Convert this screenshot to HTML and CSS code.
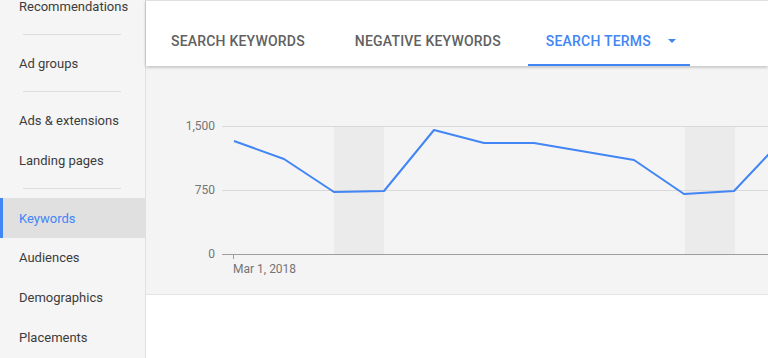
FILE: index.html
```html
<!DOCTYPE html>
<html lang="en">

<head>
    <meta charset="UTF-8">
    <meta name="viewport" content="width=device-width, initial-scale=1.0">
    <title>Keywords</title>
    <link rel="stylesheet" href="styles.css">
</head>

<body>
    <nav class="sidebar">
        <a class="nav-item">Recommendations</a>
        <div class="nav-divider"></div>
        <a class="nav-item">Ad groups</a>
        <div class="nav-divider"></div>
        <a class="nav-item">Ads &amp; extensions</a>
        <a class="nav-item">Landing pages</a>
        <div class="nav-divider"></div>
        <a class="nav-item active">Keywords</a>
        <a class="nav-item">Audiences</a>
        <a class="nav-item">Demographics</a>
        <a class="nav-item">Placements</a>
    </nav>

    <main class="main">
        <div class="tabs">
            <div class="tab">SEARCH KEYWORDS</div>
            <div class="tab">NEGATIVE KEYWORDS</div>
            <div class="tab active">SEARCH TERMS <span class="caret"></span></div>
        </div>

        <div class="chart">
            <!-- viewBox uses page coordinates so the points are easy to read off -->
            <svg width="622" height="227" viewBox="146 67 622 227">
                <rect x="334" y="126" width="50" height="128" fill="#ebebeb" />
                <rect x="685" y="126" width="50" height="128" fill="#ebebeb" />

                <line x1="222" y1="126.5" x2="768" y2="126.5" stroke="#d9d9d9" />
                <line x1="222" y1="190.5" x2="768" y2="190.5" stroke="#d9d9d9" />
                <line x1="222" y1="254.5" x2="768" y2="254.5" stroke="#9e9e9e" />
                <line x1="233.5" y1="254" x2="233.5" y2="259" stroke="#9e9e9e" />

                <text class="axis-label" x="215" y="130" text-anchor="end">1,500</text>
                <text class="axis-label" x="215" y="194" text-anchor="end">750</text>
                <text class="axis-label" x="215" y="258" text-anchor="end">0</text>
                <text class="axis-label" x="233" y="273">Mar 1, 2018</text>

                <polyline fill="none" stroke="#4285f4" stroke-width="2" stroke-linejoin="round"
                    points="234,141 284,159 334,192 384,191 434,130 484,143 534,143 584,151.5 634,160 684,194 734,191 784,138" />
            </svg>
        </div>

        <div class="below"></div>
    </main>
</body>

</html>
```

FILE: styles.css
```css
body {
    font-family: Roboto, "Liberation Sans", Arial, sans-serif;
    margin: 0;
    display: flex;
    height: 358px;
    overflow: hidden;
    background-color: #ffffff;
}

.sidebar {
    width: 145px;
    flex-shrink: 0;
    background-color: #f5f5f5;
    border-right: 1px solid #e0e0e0;
    display: flex;
    flex-direction: column;
    margin-top: -14px;
    height: 372px;
}

.nav-item {
    display: flex;
    align-items: center;
    height: 40px;
    flex-shrink: 0;
    padding-left: 19px;
    font-size: 13px;
    color: #3c3c3c;
    box-sizing: border-box;
}

.nav-item.active {
    background-color: #e0e0e0;
    color: #4285f4;
    border-left: 3px solid #4285f4;
    padding-left: 16px;
    margin-top: 1px;
    margin-bottom: -1px;
}

.nav-divider {
    height: 1px;
    flex-shrink: 0;
    margin: 8px 24px 8px 23px;
    background-color: #dddddd;
}

.main {
    flex: 1;
    display: flex;
    flex-direction: column;
}

.tabs {
    height: 66px;
    flex-shrink: 0;
    box-sizing: border-box;
    border-top: 1px solid #e0e0e0;
    background-color: #ffffff;
    box-shadow: 0 1px 3px rgba(0, 0, 0, 0.3);
    display: flex;
    padding-left: 7px;
    position: relative;
    z-index: 1;
}

.tab {
    display: flex;
    align-items: flex-end;
    padding: 0 18px 15px;
    margin-right: 14px;
    font-size: 14px;
    letter-spacing: 0.2px;
    font-weight: 500;
    color: #616161;
    border-bottom: 2px solid transparent;
}

.tab.active {
    color: #4285f4;
    border-bottom-color: #4285f4;
    padding-right: 14px;
    margin-left: -5px;
}

.caret {
    display: inline-block;
    margin-left: 17px;
    margin-bottom: 6px;
    border-left: 4px solid transparent;
    border-right: 4px solid transparent;
    border-top: 4px solid #4285f4;
}

.chart {
    height: 227px;
    flex-shrink: 0;
    margin-top: 1px;
    background-color: #f4f4f4;
    border-bottom: 1px solid #e4e4e4;
}

.chart svg {
    display: block;
}

.axis-label {
    font-size: 12px;
    fill: #757575;
}

.below {
    flex: 1;
    background-color: #ffffff;
}
```
